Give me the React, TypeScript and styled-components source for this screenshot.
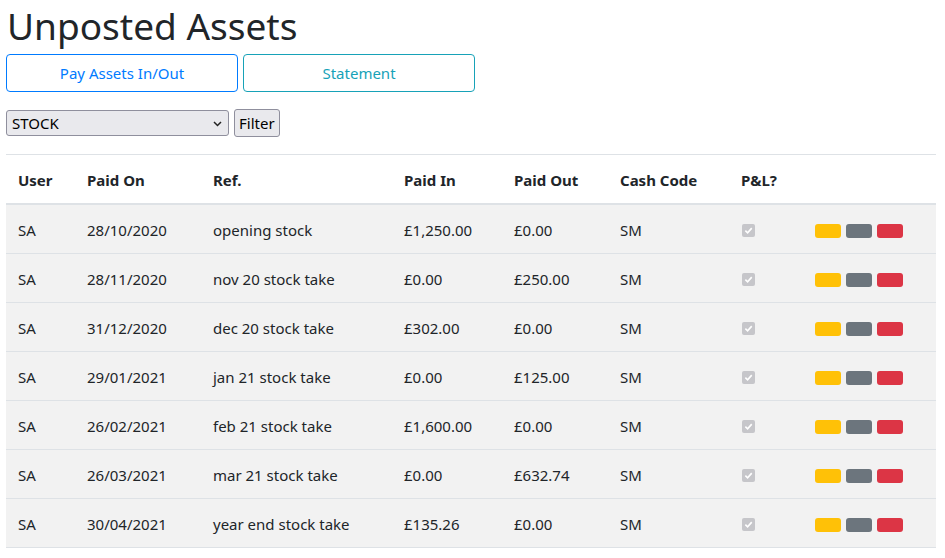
import React from "react";
import styled, { createGlobalStyle } from "styled-components";

const Global = createGlobalStyle`
  html, body { margin: 0; padding: 0; background: #fff; }
  body {
    font-family: "Segoe UI", "Noto Sans", sans-serif;
    font-size: 16px;
    line-height: 1.5;
    color: #212529;
  }
  * { box-sizing: border-box; }
`;

const Page = styled.div`
  padding: 0 9px 0 6px;
`;

const Title = styled.h1`
  margin: 0 0 3px 1px;
  font-size: 37px;
  font-weight: 400;
  line-height: 51px;
  height: 51px;
`;

const ButtonRow = styled.div`
  display: flex;
  gap: 5px;
  margin-bottom: 17px;
`;

const OutlineButton = styled.button<{ $color: string }>`
  width: 232px;
  height: 38px;
  background: #fff;
  border: 1px solid ${(p) => p.$color};
  color: ${(p) => p.$color};
  border-radius: 4px;
  font-family: inherit;
  font-size: 15px;
  padding-top: 1px;
  cursor: pointer;
`;

const FilterRow = styled.div`
  display: flex;
  align-items: center;
  gap: 5px;
  margin-bottom: 17px;
`;

const SelectWrap = styled.div`
  position: relative;
  width: 223px;
  height: 26px;
`;

const Select = styled.select`
  appearance: none;
  width: 100%;
  height: 100%;
  font-family: inherit;
  font-size: 15px;
  color: #000;
  background: #e9e9ed;
  border: 1px solid #8f8f9d;
  border-radius: 3px;
  padding: 0 24px 0 5px;
`;

const Chevron = styled.svg`
  position: absolute;
  right: 7px;
  top: 11px;
  pointer-events: none;
`;

const FilterButton = styled.button`
  height: 28px;
  padding: 0 4px;
  font-family: inherit;
  font-size: 15px;
  color: #000;
  background: #e9e9ed;
  border: 1px solid #8f8f9d;
  border-radius: 3px;
`;

const Table = styled.table`
  width: 930px;
  border-collapse: collapse;
  table-layout: fixed;
  font-size: 15px;
`;

const Th = styled.th<{ $w: number }>`
  width: ${(p) => p.$w}px;
  text-align: left;
  font-weight: 700;
  padding: 13px 12px 11px;
  line-height: 24px;
  border-top: 1px solid #dee2e6;
  border-bottom: 2px solid #dee2e6;
`;

const Row = styled.tr`
  background: #f2f2f2;
`;

const Td = styled.td`
  padding: 13px 12px 11px;
  line-height: 24px;
  border-bottom: 1px solid #dee2e6;
  vertical-align: middle;
  white-space: nowrap;
`;

const Check = styled.span`
  display: inline-flex;
  width: 13px;
  height: 13px;
  border-radius: 2px;
  background: #c6c6ca;
  align-items: center;
  justify-content: center;
  vertical-align: middle;
  margin-left: 1px;
  margin-top: -2px;
`;

const Actions = styled.div`
  display: flex;
  gap: 5px;
  padding-top: 2px;
`;

const Pill = styled.span<{ $bg: string }>`
  width: 26px;
  height: 14px;
  border-radius: 3px;
  background: ${(p) => p.$bg};
  display: inline-block;
`;

const rows = [
  ["SA", "28/10/2020", "opening stock", "£1,250.00", "£0.00", "SM"],
  ["SA", "28/11/2020", "nov 20 stock take", "£0.00", "£250.00", "SM"],
  ["SA", "31/12/2020", "dec 20 stock take", "£302.00", "£0.00", "SM"],
  ["SA", "29/01/2021", "jan 21 stock take", "£0.00", "£125.00", "SM"],
  ["SA", "26/02/2021", "feb 21 stock take", "£1,600.00", "£0.00", "SM"],
  ["SA", "26/03/2021", "mar 21 stock take", "£0.00", "£632.74", "SM"],
  ["SA", "30/04/2021", "year end stock take", "£135.26", "£0.00", "SM"],
];

const headers: [string, number][] = [
  ["User", 69],
  ["Paid On", 126],
  ["Ref.", 191],
  ["Paid In", 110],
  ["Paid Out", 106],
  ["Cash Code", 121],
  ["P&L?", 74],
  ["", 133],
];

export default function App() {
  return (
    <Page>
      <Global />
      <Title>Unposted Assets</Title>
      <ButtonRow>
        <OutlineButton $color="#007bff">Pay Assets In/Out</OutlineButton>
        <OutlineButton $color="#17a2b8">Statement</OutlineButton>
      </ButtonRow>
      <FilterRow>
        <SelectWrap>
          <Select defaultValue="STOCK">
            <option>STOCK</option>
          </Select>
          <Chevron width="9" height="6" viewBox="0 0 9 6">
            <path d="M1 1 L4.5 4.5 L8 1" stroke="#222" strokeWidth="1.5" fill="none" />
          </Chevron>
        </SelectWrap>
        <FilterButton>Filter</FilterButton>
      </FilterRow>
      <Table>
        <thead>
          <tr>
            {headers.map(([h, w], i) => (
              <Th key={i} $w={w}>
                {h}
              </Th>
            ))}
          </tr>
        </thead>
        <tbody>
          {rows.map((r, i) => (
            <Row key={i}>
              {r.map((c, j) => (
                <Td key={j}>{c}</Td>
              ))}
              <Td>
                <Check>
                  <svg width="9" height="9" viewBox="0 0 10 10">
                    <path d="M1.5 5.2 L4 7.6 L8.6 2.4" stroke="#fff" strokeWidth="1.8" fill="none" />
                  </svg>
                </Check>
              </Td>
              <Td>
                <Actions>
                  <Pill $bg="#ffc107" />
                  <Pill $bg="#6c757d" />
                  <Pill $bg="#dc3545" />
                </Actions>
              </Td>
            </Row>
          ))}
        </tbody>
      </Table>
    </Page>
  );
}
